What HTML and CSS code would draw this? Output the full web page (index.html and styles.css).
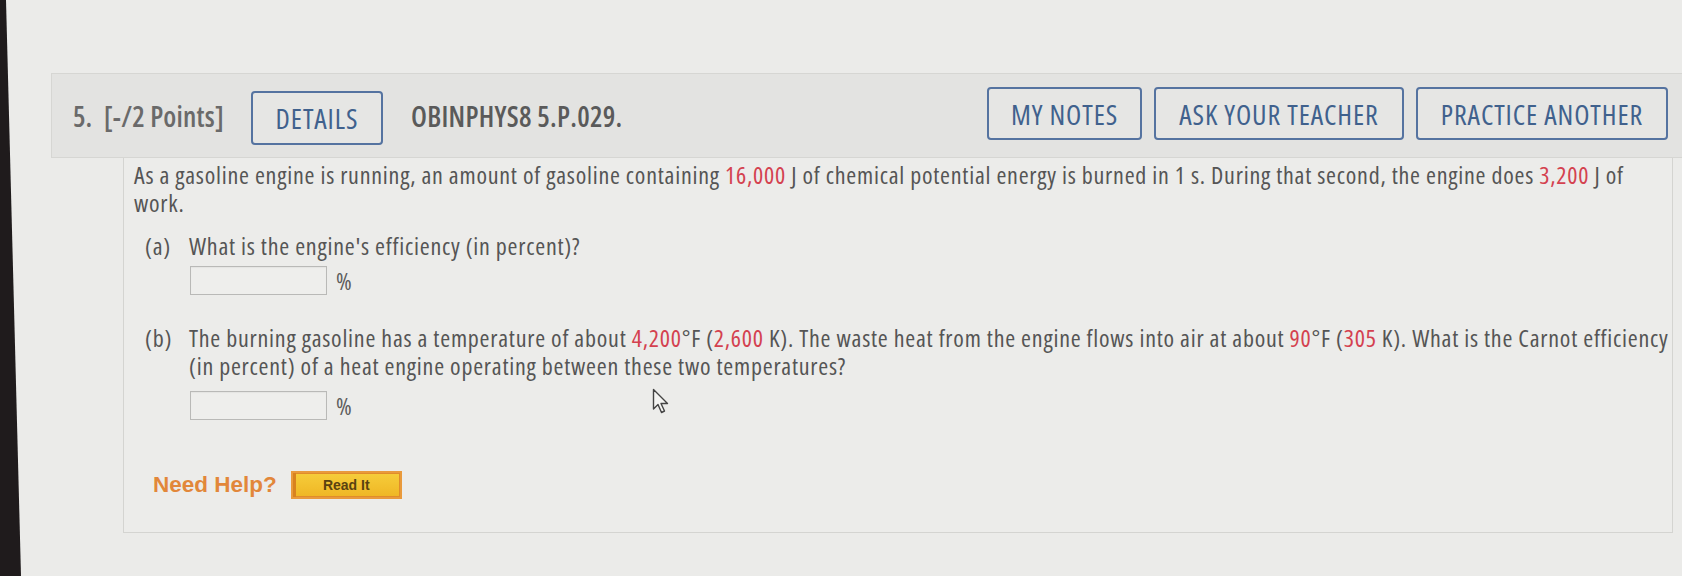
FILE: index.html
```html
<!DOCTYPE html>
<html lang="en">
<head>
<meta charset="utf-8">
<title>OBINPHYS8 5.P.029</title>
<link rel="stylesheet" href="styles.css">
</head>
<body>
<div class="bezel"></div>
<div class="page">
  <div class="qhead">
    <span class="qnum">5.</span>
    <span class="qpts">[-/2 Points]</span>
    <span class="btn btn-details">DETAILS</span>
    <span class="qid">OBINPHYS8 5.P.029.</span>
    <div class="actions">
      <span class="btn btn-notes">MY NOTES</span>
      <span class="btn btn-ask">ASK YOUR TEACHER</span>
      <span class="btn btn-practice">PRACTICE ANOTHER</span>
    </div>
  </div>
  <div class="qbody">
    <p class="stem">As a gasoline engine is running, an amount of gasoline containing <span class="red">16,000</span> J of chemical potential energy is burned in 1 s. During that second, the engine does <span class="red">3,200</span> J of<br>work.</p>

    <div class="part part-a">
      <div class="prow">
        <span class="plabel">(a)</span>
        <span class="ptext">What is the engine's efficiency (in percent)?</span>
      </div>
      <div class="answer">
        <span class="field"></span><span class="unit">%</span>
      </div>
    </div>

    <div class="part part-b">
      <div class="prow">
        <span class="plabel">(b)</span>
        <span class="ptext">The burning gasoline has a temperature of about <span class="red">4,200</span>°F (<span class="red">2,600</span> K). The waste heat from the engine flows into air at about <span class="red">90</span>°F (<span class="red">305</span> K). What is the Carnot efficiency<br>(in percent) of a heat engine operating between these two temperatures?</span>
      </div>
      <div class="answer">
        <span class="field"></span><span class="unit">%</span>
      </div>
      <svg class="cursor" width="18" height="26" viewBox="0 0 18 26" aria-hidden="true">
        <path d="M1.5 1.5 L1.5 21 L6 16.5 L9.5 24.5 L12.5 23 L9 15.5 L15.5 15.5 Z" fill="#f4f4f2" stroke="#444" stroke-width="1.4" stroke-linejoin="round"/>
      </svg>
    </div>

    <div class="help">
      <span class="help-label">Need Help?</span>
      <span class="readit">Read It</span>
    </div>
  </div>
</div>
</body>
</html>
```

FILE: styles.css
```css
html, body {
  margin: 0;
  padding: 0;
}

body {
  background: #ebebe9;
  font-family: "Open Sans", "Noto Sans", "Liberation Sans", sans-serif;
  color: #555555;
  width: 1682px;
  height: 576px;
  overflow: hidden;
  position: relative;
}

.bezel {
  position: absolute;
  left: 0;
  top: 0;
  width: 24px;
  height: 576px;
  background: #1f1b1c;
  clip-path: polygon(0 0, 6px 0, 21px 100%, 0 100%);
  z-index: 5;
}

.page {
  padding-top: 73px;
}

.qhead {
  margin-left: 51px;
  height: 85px;
  box-sizing: border-box;
  background: #e3e3e1;
  border: 1px solid #d6d6d3;
  border-right: none;
  display: flex;
  align-items: center;
  padding-left: 21px;
  padding-right: 14px;
  font-stretch: 75%;
  font-size: 28px;
}

.qnum {
  font-weight: 600;
  color: #6a6a6a;
  width: 31px;
}

.qpts {
  font-weight: 600;
  color: #6a6a6a;
  letter-spacing: 0.2px;
  width: 147px;
}

.btn {
  display: flex;
  align-items: center;
  justify-content: center;
  box-sizing: border-box;
  border: 2px solid #5573a0;
  border-radius: 4px;
  color: #40618d;
  letter-spacing: 0.9px;
  height: 53px;
  background: #e6e6e4;
}

.btn-details {
  width: 132px;
  height: 54px;
  margin-top: 4px;
}

.qid {
  margin-left: 28px;
  font-weight: 600;
  letter-spacing: 0.28px;
  color: #5a5a5a;
}

.actions {
  margin-left: auto;
  display: flex;
  gap: 12px;
  margin-top: -4px;
}

.btn-notes { width: 155px; }
.btn-ask { width: 250px; }
.btn-practice { width: 252px; }

.qbody {
  margin-left: 123px;
  margin-right: 9px;
  box-sizing: border-box;
  height: 375px;
  border: 1px solid #d4d4d1;
  border-top: none;
  background: #ececea;
  padding: 3px 2px 0 10px;
  font-size: 24px;
  font-stretch: 75%;
  letter-spacing: 0.76px;
  line-height: 28px;
}

.stem {
  margin: 0;
}

.red {
  color: #d4414f;
}

.part {
  position: relative;
}

.part-a {
  margin-top: 15px;
}

.part-b {
  margin-top: 29px;
}

.prow {
  display: flex;
}

.plabel {
  flex: 0 0 55px;
  padding-left: 11px;
  box-sizing: border-box;
}

.ptext {
  flex: 1;
}

.answer {
  margin-left: 56px;
  display: flex;
  align-items: center;
  gap: 9px;
}

.part-a .answer {
  margin-top: 6px;
}

.part-b .answer {
  margin-top: 11px;
}

.field {
  display: block;
  width: 137px;
  height: 29px;
  box-sizing: border-box;
  border: 1px solid #b9b9b7;
  background: #eeeeec;
  box-shadow: inset 0 1px 1px rgba(0, 0, 0, 0.04);
}

.unit {
  color: #5c5c5c;
}

.cursor {
  position: absolute;
  left: 518px;
  top: 64px;
}

.help {
  margin-top: 51px;
  margin-left: 19px;
  display: flex;
  align-items: center;
  gap: 14px;
  letter-spacing: normal;
}

.help-label {
  font-family: "Liberation Sans", Arial, sans-serif;
  font-weight: 700;
  font-size: 22.5px;
  font-stretch: normal;
  color: #e2873a;
}

.readit {
  display: flex;
  align-items: center;
  justify-content: center;
  width: 111px;
  height: 28px;
  box-sizing: border-box;
  border: 2px solid #e99a3c;
  box-shadow: inset 3px 0 0 #d8821f, inset 0 0 0 1px #e08c2a;
  background: linear-gradient(#f6cd3b, #efb624);
  font-family: "Liberation Sans", Arial, sans-serif;
  font-weight: 700;
  font-size: 14px;
  font-stretch: normal;
  color: #5a4210;
}
```
